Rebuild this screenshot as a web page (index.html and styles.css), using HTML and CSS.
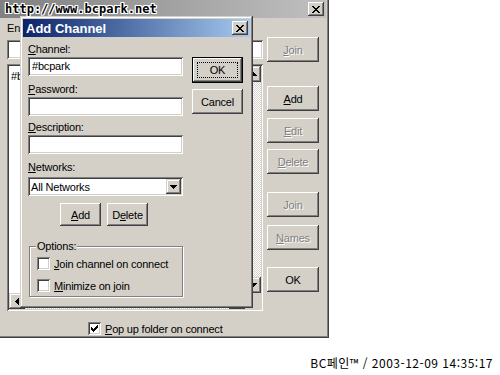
FILE: index.html
```html
<!DOCTYPE html>
<html lang="ko">
<head>
  <meta charset="UTF-8" />
  <title>Add Channel</title>
  <link rel="stylesheet" href="styles.css">
</head>
<body>

<div class="screen">

  <!-- parent window, mostly hidden by the dialog -->
  <div class="window folder">
    <div class="titlebar inactive">
      <span class="title-text"></span>
      <span class="close-btn">
        <svg width="8" height="7" viewBox="0 0 8 7"><path d="M0 0h2v1h-2z M6 0h2v1h-2z M1 1h2v1h-2z M5 1h2v1h-2z M2 2h4v1h-4z M3 3h2v1h-2z M2 4h4v1h-4z M1 5h2v1h-2z M5 5h2v1h-2z M0 6h2v1h-2z M6 6h2v1h-2z"/></svg>
      </span>
    </div>

    <div class="folder-body">
      <!-- only the first letters show past the dialog -->
      <div class="label">En</div>

      <div class="row-top">
        <div class="field folder-input"></div>
        <div class="btn disabled"><u>J</u>oin</div>
      </div>

      <div class="row-main">
        <div class="field listbox">
          <div class="list-items">#b</div>
          <div class="vscroll">
            <div class="scroll-btn">
              <svg width="7" height="4" viewBox="0 0 7 4"><path d="M3 0h1v1h-1z M2 1h3v1h-3z M1 2h5v1h-5z M0 3h7v1h-7z"/></svg>
            </div>
            <div class="track"></div>
            <div class="scroll-btn">
              <svg width="7" height="4" viewBox="0 0 7 4"><path d="M0 0h7v1h-7z M1 1h5v1h-5z M2 2h3v1h-3z M3 3h1v1h-1z"/></svg>
            </div>
          </div>
          <div class="hscroll">
            <div class="scroll-btn">
              <svg width="4" height="7" viewBox="0 0 4 7"><path d="M3 0h1v7h-1z M2 1h1v5h-1z M1 2h1v3h-1z M0 3h1v1h-1z"/></svg>
            </div>
            <div class="track"></div>
            <div class="scroll-btn">
              <svg width="4" height="7" viewBox="0 0 4 7"><path d="M0 0h1v7h-1z M1 1h1v5h-1z M2 2h1v3h-1z M3 3h1v1h-1z"/></svg>
            </div>
          </div>
          <div class="corner"></div>
        </div>

        <div class="side-buttons">
          <div class="btn gap-add"><u>A</u>dd</div>
          <div class="btn disabled gap-edit"><u>E</u>dit</div>
          <div class="btn disabled gap-delete"><u>D</u>elete</div>
          <div class="btn disabled gap-join">Join</div>
          <div class="btn disabled gap-names"><u>N</u>ames</div>
          <div class="btn gap-ok">OK</div>
        </div>
      </div>

      <div class="check-row popup">
        <span class="checkbox">
          <svg width="7" height="7" viewBox="0 0 7 7"><path d="M6 0h1v1h-1z M5 1h2v1h-2z M0 2h1v1h-1z M4 2h3v1h-3z M0 3h2v1h-2z M3 3h3v1h-3z M0 4h5v1h-5z M1 5h3v1h-3z M2 6h1v1h-1z"/></svg>
        </span>
        <span><u>P</u>op up folder on connect</span>
      </div>
    </div>
  </div>

  <!-- Add Channel dialog -->
  <div class="window dialog">
    <div class="titlebar">
      <span class="title-text">Add Channel</span>
      <span class="close-btn">
        <svg width="8" height="7" viewBox="0 0 8 7"><path d="M0 0h2v1h-2z M6 0h2v1h-2z M1 1h2v1h-2z M5 1h2v1h-2z M2 2h4v1h-4z M3 3h2v1h-2z M2 4h4v1h-4z M1 5h2v1h-2z M5 5h2v1h-2z M0 6h2v1h-2z M6 6h2v1h-2z"/></svg>
      </span>
    </div>

    <div class="dialog-body">
      <div class="fields">
        <div class="group">
          <div class="label"><u>C</u>hannel:</div>
          <div class="field input">#bcpark</div>
        </div>
        <div class="group gap-password">
          <div class="label"><u>P</u>assword:</div>
          <div class="field input"></div>
        </div>
        <div class="group gap-description">
          <div class="label"><u>D</u>escription:</div>
          <div class="field input"></div>
        </div>
        <div class="group gap-networks">
          <div class="label label-networks"><u>N</u>etworks:</div>
          <div class="field combo">
            <span class="combo-text">All Networks</span>
            <span class="combo-btn">
              <svg width="7" height="4" viewBox="0 0 7 4"><path d="M0 0h7v1h-7z M1 1h5v1h-5z M2 2h3v1h-3z M3 3h1v1h-1z"/></svg>
            </span>
          </div>
        </div>

        <div class="list-buttons">
          <div class="btn small"><u>A</u>dd</div>
          <div class="btn small">D<u>e</u>lete</div>
        </div>

        <fieldset class="groupbox">
          <legend>Options:</legend>
          <div class="check-row">
            <span class="checkbox"></span>
            <span><u>J</u>oin channel on connect</span>
          </div>
          <div class="check-row second">
            <span class="checkbox"></span>
            <span><u>M</u>inimize on join</span>
          </div>
        </fieldset>
      </div>

      <div class="dialog-buttons">
        <div class="btn default"><span class="focus">OK</span></div>
        <div class="btn cancel">Cancel</div>
      </div>
    </div>
  </div>

  <div class="watermark">http://www.bcpark.net</div>
</div>

<div class="caption">BC페인™ / 2003-12-09 14:35:17</div>

</body>
</html>
```

FILE: styles.css
```css
* {
  box-sizing: border-box;
}

body {
  margin: 0;
  background: #fff;
  font-family: "Liberation Sans", Arial, sans-serif;
  font-size: 11px;
  letter-spacing: -0.2px;
  color: #000;
}

u {
  text-decoration: underline;
  text-underline-offset: 1px;
}

.screen {
  position: relative;
  width: 500px;
  height: 341px;
  overflow: hidden;
}

/* classic 3d frames */
.window {
  position: absolute;
  display: flex;
  flex-direction: column;
  padding: 3px;
  background: #d4d0c8;
  box-shadow: inset -1px -1px #404040, inset 1px 1px #d4d0c8,
              inset -2px -2px #808080, inset 2px 2px #fff;
}

.folder {
  left: -3px;
  top: -3px;
  width: 332px;
  height: 341px;
}

.dialog {
  left: 20px;
  top: 16px;
  width: 233px;
  height: 292px;
}

.titlebar {
  display: flex;
  align-items: center;
  justify-content: space-between;
  height: 18px;
  padding: 0 2px 0 3px;
  background: linear-gradient(to right, #0a246a, #a6caf0);
  color: #fff;
  font-weight: bold;
  font-size: 13px;
  letter-spacing: 0;
}

.titlebar.inactive {
  background: linear-gradient(to right, #808080, #c0c0c0);
}

.close-btn {
  display: flex;
  align-items: center;
  justify-content: center;
  width: 16px;
  height: 14px;
  background: #d4d0c8;
  box-shadow: inset -1px -1px #404040, inset 1px 1px #fff,
              inset -2px -2px #808080, inset 2px 2px #d4d0c8;
}

.field {
  background: #fff;
  box-shadow: inset 1px 1px #808080, inset -1px -1px #fff,
              inset 2px 2px #404040, inset -2px -2px #d4d0c8;
}

.btn {
  display: flex;
  align-items: center;
  justify-content: center;
  width: 52px;
  height: 25px;
  background: #d4d0c8;
  box-shadow: inset -1px -1px #404040, inset 1px 1px #fff,
              inset -2px -2px #808080, inset 2px 2px #d4d0c8;
}

.btn.disabled {
  color: #808080;
  text-shadow: 1px 1px #fff;
}

.label {
  line-height: 13px;
  height: 13px;
}

/* parent window */
.folder-body {
  display: flex;
  flex-direction: column;
  padding: 4px 0 0 7px;
}

.row-top {
  display: flex;
  align-items: center;
  gap: 4px;
  margin-top: 2px;
}

.folder-input {
  width: 256px;
  height: 19px;
}

.row-main {
  display: flex;
  gap: 4px;
  margin-top: 2px;
}

.listbox {
  display: grid;
  grid-template-columns: 1fr 16px;
  grid-template-rows: 1fr 16px;
  width: 256px;
  height: 247px;
  padding: 2px;
}

.list-items {
  padding: 4px 2px;
}

.vscroll {
  display: flex;
  flex-direction: column;
}

.hscroll {
  display: flex;
}

.scroll-btn {
  display: flex;
  align-items: center;
  justify-content: center;
  flex: 0 0 16px;
  width: 16px;
  height: 16px;
  background: #d4d0c8;
  box-shadow: inset -1px -1px #404040, inset 1px 1px #d4d0c8,
              inset -2px -2px #808080, inset 2px 2px #fff;
}

.track {
  flex: 1;
  background: repeating-conic-gradient(#d4d0c8 0 25%, #fff 0 50%) 0 0 / 2px 2px;
}

.corner {
  background: #d4d0c8;
}

.side-buttons {
  display: flex;
  flex-direction: column;
}

.gap-add { margin-top: 22px; }
.gap-edit { margin-top: 7px; }
.gap-delete { margin-top: 6px; }
.gap-join { margin-top: 18px; }
.gap-names { margin-top: 8px; }
.gap-ok { margin-top: 17px; }

.check-row {
  display: flex;
  align-items: center;
  gap: 4px;
  height: 13px;
}

.checkbox {
  display: flex;
  align-items: center;
  justify-content: center;
  width: 13px;
  height: 13px;
  background: #fff;
  box-shadow: inset 1px 1px #808080, inset -1px -1px #fff,
              inset 2px 2px #404040, inset -2px -2px #d4d0c8;
}

.popup {
  margin-top: 11px;
  padding-left: 81px;
}

/* dialog */
.dialog-body {
  display: grid;
  grid-template-columns: 155px 51px;
  column-gap: 9px;
  align-items: start;
  padding: 6px 0 0 5px;
}

.fields {
  display: flex;
  flex-direction: column;
}

.group .label {
  margin-bottom: 1px;
}

.input {
  height: 19px;
  padding: 3px 4px;
  line-height: 13px;
}

.gap-password { margin-top: 7px; }
.gap-description { margin-top: 5px; }
.gap-networks { margin-top: 7px; }

.group .label-networks {
  margin-bottom: 3px;
}

.combo {
  display: flex;
  align-items: center;
  justify-content: space-between;
  height: 19px;
  padding: 2px;
}

.combo-text {
  padding-left: 1px;
}

.combo-btn {
  display: flex;
  align-items: center;
  justify-content: center;
  width: 15px;
  height: 15px;
  background: #d4d0c8;
  box-shadow: inset -1px -1px #404040, inset 1px 1px #d4d0c8,
              inset -2px -2px #808080, inset 2px 2px #fff;
}

.list-buttons {
  display: flex;
  gap: 6px;
  margin-top: 7px;
  padding-left: 32px;
}

.btn.small {
  width: 41px;
  height: 23px;
}

.groupbox {
  width: 154px;
  margin: 14px 0 0 1px;
  padding: 4px 7px 4px 7px;
  min-width: 0;
  border: 1px solid #808080;
  box-shadow: 1px 1px 0 #fff, inset 1px 1px #fff;
}

.groupbox legend {
  padding: 0 1px;
  margin-left: -1px;
  line-height: 13px;
  background: #d4d0c8;
}

.groupbox .second {
  margin-top: 9px;
}

.dialog-buttons {
  display: flex;
  flex-direction: column;
}

.btn.default {
  width: 51px;
  height: 26px;
  margin-top: 14px;
  padding: 4px;
  border: 1px solid #000;
  box-shadow: inset -1px -1px #404040, inset 1px 1px #fff,
              inset -2px -2px #808080, inset 2px 2px #d4d0c8;
}

.focus {
  display: flex;
  align-items: center;
  justify-content: center;
  width: 100%;
  height: 100%;
  border: 1px dotted #000;
}

.btn.cancel {
  width: 51px;
  margin-top: 6px;
}

.watermark {
  position: absolute;
  left: 5px;
  top: 2px;
  font-family: "DejaVu Sans Mono", monospace;
  font-weight: bold;
  font-size: 12px;
  letter-spacing: 0;
  color: #000;
  text-shadow: 1px 0 #fff, -1px 0 #fff, 0 1px #fff, 0 -1px #fff,
               1px 1px #fff, -1px -1px #fff, 1px -1px #fff, -1px 1px #fff;
}

.caption {
  margin-top: 14px;
  padding-right: 7px;
  text-align: right;
  font-family: "Noto Sans CJK KR", sans-serif;
  font-size: 12px;
  line-height: 16px;
  letter-spacing: 0.5px;
}
```
